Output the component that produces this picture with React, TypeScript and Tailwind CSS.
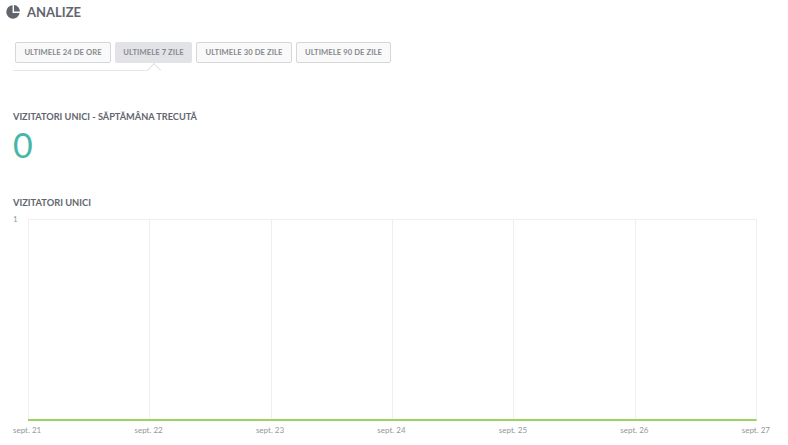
const tabs = [
  { label: "ULTIMELE 24 DE ORE", width: "w-[96px]" },
  { label: "ULTIMELE 7 ZILE", width: "w-[77px]", active: true },
  { label: "ULTIMELE 30 DE ZILE", width: "w-[96px]" },
  { label: "ULTIMELE 90 DE ZILE", width: "w-[95px]" },
]

const days = ["sept. 21", "sept. 22", "sept. 23", "sept. 24", "sept. 25", "sept. 26", "sept. 27"]

function PieIcon() {
  return (
    <svg viewBox="0 0 14 14" className="w-[14px] h-[14px] fill-[#62656e]">
      <path d="M6.6 0.3 A6.7 6.7 0 1 0 13.6 8 L6.6 8 Z" />
      <path d="M8 0.1 A6.3 6.3 0 0 1 13.9 6.6 L8 6.6 Z" />
    </svg>
  )
}

function App() {
  return (
    <div className="w-[788px] h-[445px] overflow-hidden bg-white font-['Lato',sans-serif]">
      <div className="flex items-center h-[23px] pl-[6px] gap-[7px]">
        <PieIcon />
        <h1 className="text-[13px] leading-[23px] font-bold text-[#62656e] translate-y-[1px]">ANALIZE</h1>
      </div>

      <div className="flex gap-[4px] pl-[15px] mt-[19px]">
        {tabs.map((tab) => (
          <button
            key={tab.label}
            className={`h-[21px] ${tab.width} rounded-[2px] text-[7.6px] tracking-[0.1px] font-bold whitespace-nowrap text-[#86898f] border ${
              tab.active ? "bg-[#e2e3e7] border-[#e2e3e7]" : "bg-[#f9f9f9] border-[#d6d7da]"
            }`}
          >
            {tab.label}
          </button>
        ))}
      </div>

      <div className="relative ml-[13px] mt-[7px] w-[148px] h-[1px]">
        <div className="w-[134px] h-[1px] bg-[#e6e7e9]" />
        <div className="absolute left-[136px] top-[-5px] w-[10px] h-[10px] rotate-45 border-l border-t border-[#e0e1e4] bg-white" />
      </div>

      <div className="ml-[13px] mt-[39px] text-[9.2px] leading-[14px] font-bold text-[#62656e]">
        VIZITATORI UNICI - SĂPTĂMÂNA TRECUTĂ
      </div>
      <div className="ml-[13px] mt-[1px] text-[34px] leading-[40px] text-[#45b8a5]">0</div>

      <div className="ml-[13px] mt-[31px] text-[9.3px] leading-[14px] font-bold text-[#62656e]">
        VIZITATORI UNICI
      </div>

      <div className="flex mt-[5px] pl-[13px]">
        <div className="w-[15px] shrink-0 text-[8px] leading-[8px] text-[#94969b]">1</div>
        <div className="w-[729px] mt-[4px] h-[202px] grid grid-cols-6 border-t border-r border-[#efeff1] border-b-2 border-b-[#9ad45c]">
          {days.slice(1).map((day) => (
            <div key={day} className="border-l border-[#efeff1]" />
          ))}
        </div>
      </div>
      <div className="flex justify-between w-[757px] ml-[13px] mt-[3px]">
        {days.map((day) => (
          <span key={day} className="text-[8px] leading-[12px] text-[#94969b]">
            {day}
          </span>
        ))}
      </div>
    </div>
  )
}

export default App
